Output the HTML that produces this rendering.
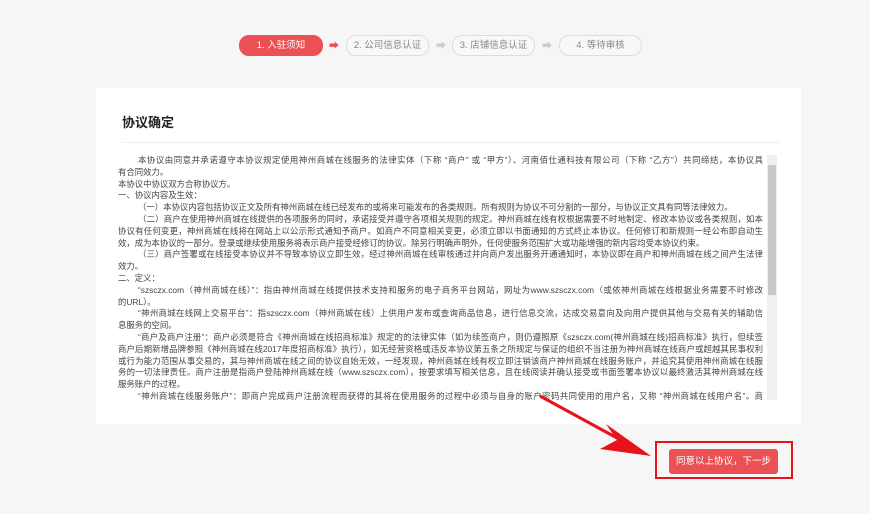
<!DOCTYPE html>
<html><head><meta charset="utf-8"><style>
body{margin:0;width:870px;height:514px;background:#f6f6f6;position:relative;overflow:hidden;font-family:"Liberation Sans","Noto Sans CJK SC",sans-serif}
.step{position:absolute;top:35px;height:19px;border:1px solid #ddd;border-radius:10px;background:#f8f8f8;color:#888;font-size:9.5px;line-height:19px;text-align:center}
.step.on{background:#ea5054;border-color:#ea5054;color:#fff}
.ar{position:absolute;top:37px;font-size:10px;color:#ccc}
.card{position:absolute;left:96px;top:88px;width:705px;height:336px;background:#fff}
h1{position:absolute;left:26px;top:24px;margin:0;font-size:13px;font-weight:bold;color:#222}
.hr{position:absolute;left:26px;right:22px;top:54px;height:1px;background:#eee}
.txt{position:absolute;left:22px;top:67px;width:645px;height:245px;overflow:hidden;font-size:8.4px;line-height:11.8px;color:#444}
.txt div{white-space:nowrap;overflow:hidden}
.txt div.j{white-space:normal;text-align:justify;text-align-last:justify;height:11.8px}
.i{padding-left:20px}
.sb{position:absolute;left:671px;top:67px;width:10px;height:245px;background:#f0f0f0}
.th{position:absolute;left:1px;top:10px;width:8px;height:130px;background:#c8c8c8}
.btnbox{position:absolute;left:655px;top:441px;width:138px;height:38px;border:2px solid #e8121a;box-sizing:border-box}
.btn{position:absolute;left:669px;top:449px;width:109px;height:25px;background:#ea5054;border-radius:3px;color:#fff;font-size:9.5px;line-height:25px;text-align:center}
</style></head><body>
<div class="step on" style="left:239px;width:82px">1. 入驻须知</div>
<div class="ar" style="left:329px;color:#ea5054">➡</div>
<div class="step" style="left:346px;width:81px">2. 公司信息认证</div>
<div class="ar" style="left:436px">➡</div>
<div class="step" style="left:452px;width:81px">3. 店铺信息认证</div>
<div class="ar" style="left:542px">➡</div>
<div class="step" style="left:559px;width:81px">4. 等待审核</div>
<div class="card">
<h1>协议确定</h1><div class="hr"></div>
<div class="txt">
<div class="i j">本协议由同意并承诺遵守本协议规定使用神州商城在线服务的法律实体（下称 “商户” 或 “甲方”）、河南佰仕通科技有限公司（下称 “乙方”）共同缔结，本协议具</div>
<div>有合同效力。</div>
<div>本协议中协议双方合称协议方。</div>
<div>一、协议内容及生效：</div>
<div class="i">（一）本协议内容包括协议正文及所有神州商城在线已经发布的或将来可能发布的各类规则。所有规则为协议不可分割的一部分，与协议正文具有同等法律效力。</div>
<div class="i j">（二）商户在使用神州商城在线提供的各项服务的同时，承诺接受并遵守各项相关规则的规定。神州商城在线有权根据需要不时地制定、修改本协议或各类规则，如本</div>
<div class="j">协议有任何变更，神州商城在线将在网站上以公示形式通知予商户。如商户不同意相关变更，必须立即以书面通知的方式终止本协议。任何修订和新规则一经公布即自动生</div>
<div>效，成为本协议的一部分。登录或继续使用服务将表示商户接受经修订的协议。除另行明确声明外，任何使服务范围扩大或功能增强的新内容均受本协议约束。</div>
<div class="i j">（三）商户签署或在线接受本协议并不导致本协议立即生效，经过神州商城在线审核通过并向商户发出服务开通通知时，本协议即在商户和神州商城在线之间产生法律</div>
<div>效力。</div>
<div>二、定义：</div>
<div class="i j">“szsczx.com（神州商城在线）”：指由神州商城在线提供技术支持和服务的电子商务平台网站，网址为www.szsczx.com（或依神州商城在线根据业务需要不时修改</div>
<div>的URL）。</div>
<div class="i j">“神州商城在线网上交易平台”：指szsczx.com（神州商城在线）上供用户发布或查询商品信息，进行信息交流，达成交易意向及向用户提供其他与交易有关的辅助信</div>
<div>息服务的空间。</div>
<div class="i j">“商户及商户注册”：商户必须是符合《神州商城在线招商标准》规定的的法律实体（如为续签商户，则仍遵照原《szsczx.com(神州商城在线)招商标准》执行，但续签</div>
<div class="j">商户后期新增品牌参照《神州商城在线2017年度招商标准》执行），如无经营资格或违反本协议第五条之所规定与保证的组织不当注册为神州商城在线商户或超越其民事权利</div>
<div class="j">或行为能力范围从事交易的，其与神州商城在线之间的协议自始无效，一经发现，神州商城在线有权立即注销该商户神州商城在线服务账户，并追究其使用神州商城在线服</div>
<div class="j">务的一切法律责任。商户注册是指商户登陆神州商城在线（www.szsczx.com），按要求填写相关信息，且在线阅读并确认接受或书面签署本协议以最终激活其神州商城在线</div>
<div>服务账户的过程。</div>
<div class="i j">“神州商城在线服务账户”：即商户完成商户注册流程而获得的其将在使用服务的过程中必须与自身的账户密码共同使用的用户名，又称 “神州商城在线用户名”。商</div>
</div>
<div class="sb"><div class="th"></div></div>
</div>
<svg style="position:absolute;left:0;top:0" width="870" height="514">
<line x1="540" y1="396" x2="628" y2="444" stroke="#e8121a" stroke-width="3"/>
<polygon points="651,456 600,449 617,440 606,424" fill="#e8121a"/>
</svg>
<div class="btnbox"></div>
<div class="btn">同意以上协议，下一步</div>
</body></html>
